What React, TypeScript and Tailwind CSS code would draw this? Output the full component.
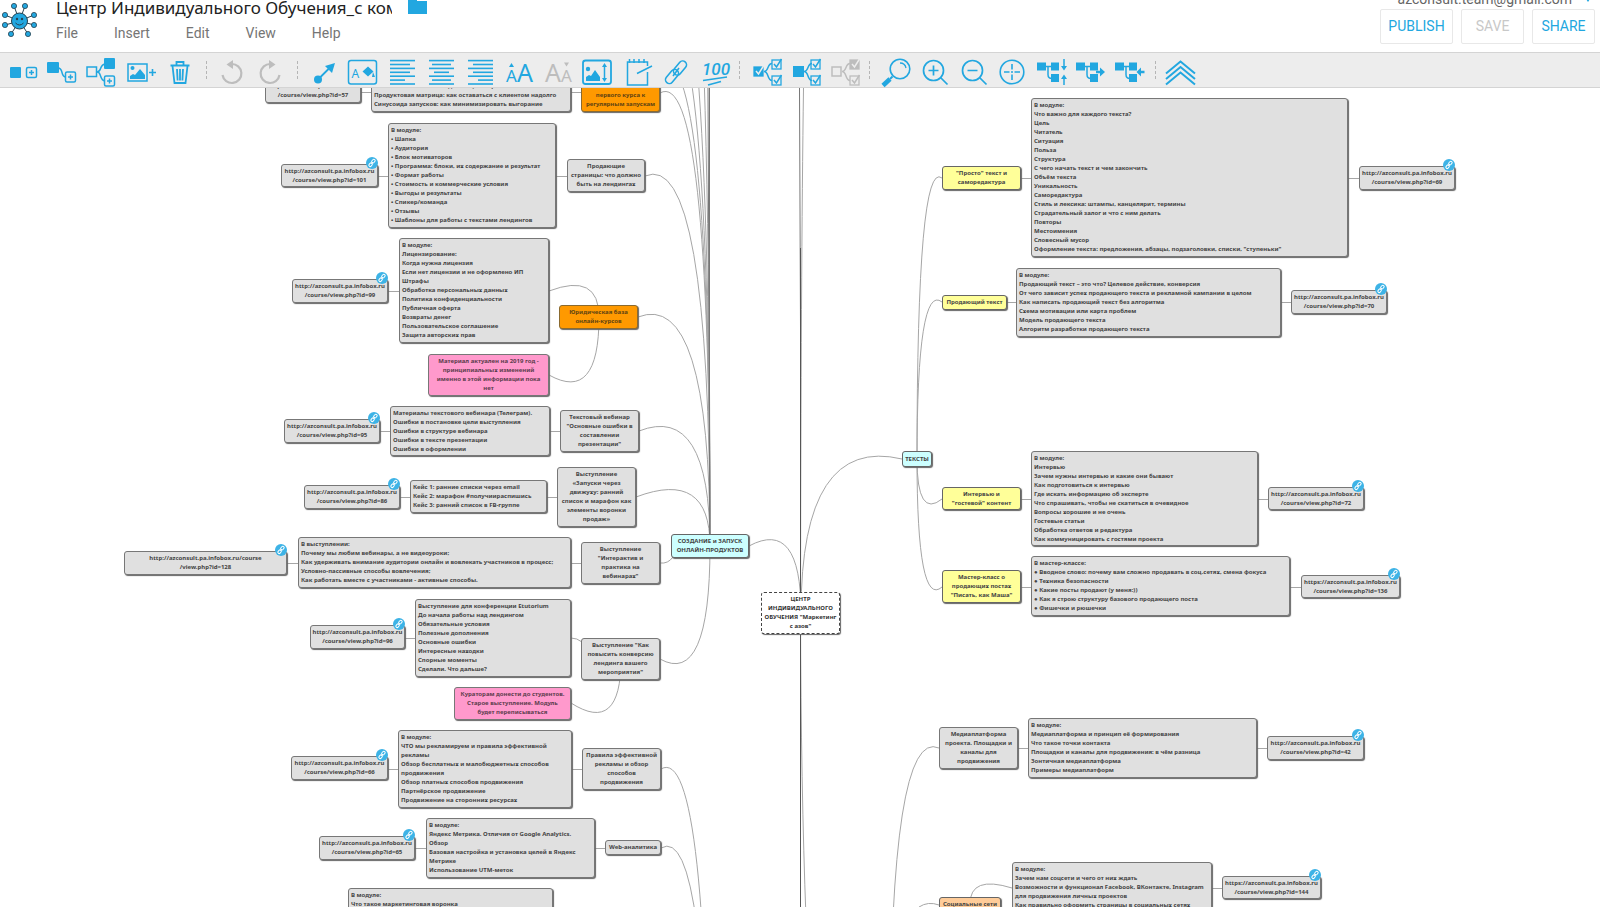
import React from "react";

type Kind = "link" | "list" | "topic";
type Tone = "gray" | "orange" | "pink" | "aqua" | "yellow" | "peach" | "root";

interface MapNode {
  x: number;
  y: number;
  w: number;
  h: number;
  kind: Kind;
  tone?: Tone;
  text: string[];
}

const HOST = "http://azconsult.pa.infobox.ru";
const HOSTS = "https://azconsult.pa.infobox.ru";

const NODES: MapNode[] = [
  { x: 265, y: -9, w: 96, h: 24, kind: "link", text: [HOST, "/course/view.php?id=57"] },
  { x: 371, y: -9, w: 200, h: 33, kind: "list", text: ["Ваша онлайн-школа на дистанции: стратегические планы.", "Продуктовая матрица: как оставаться с клиентом надолго", "Синусоида запусков: как минимизировать выгорание"] },
  { x: 581, y: -9, w: 79, h: 33, kind: "topic", tone: "orange", text: ["онлайн-школы от", "первого курса к", "регулярным запускам"] },
  { x: 281, y: 76, w: 97, h: 23, kind: "link", text: [HOST, "/course/view.php?id=101"] },
  { x: 388, y: 35, w: 168, h: 105, kind: "list", text: ["В модуле:", "• Шапка", "• Аудитория", "• Блок мотиваторов", "• Программа: блоки, их содержание и результат", "• Формат работы", "• Стоимость и коммерческие условия", "• Выгоды и результаты", "• Спикер/команда", "• Отзывы", "• Шаблоны для работы с текстами лендингов"] },
  { x: 567, y: 71, w: 78, h: 33, kind: "topic", text: ["Продающие", "страницы: что должно", "быть на лендингах"] },
  { x: 292, y: 191, w: 96, h: 24, kind: "link", text: [HOST, "/course/view.php?id=99"] },
  { x: 399, y: 150, w: 150, h: 105, kind: "list", text: ["В модуле:", "Лицензирование:", "Когда нужна лицензия", "Если нет лицензии и не оформлено ИП", "Штрафы", "Обработка персональных данных", "Политика конфиденциальности", "Публичная оферта", "Возвраты денег", "Пользовательское соглашение", "Защита авторских прав"] },
  { x: 559, y: 217, w: 79, h: 24, kind: "topic", tone: "orange", text: ["Юридическая база", "онлайн-курсов"] },
  { x: 428, y: 266, w: 121, h: 42, kind: "topic", tone: "pink", text: ["Материал актуален на 2019 год -", "принципиальных изменений", "именно в этой информации пока", "нет"] },
  { x: 284, y: 331, w: 96, h: 24, kind: "link", text: [HOST, "/course/view.php?id=95"] },
  { x: 390, y: 318, w: 160, h: 50, kind: "list", text: ["Материалы текстового вебинара (Телеграм).", "Ошибки в постановке цели выступления", "Ошибки в структуре вебинара", "Ошибки в тексте презентации", "Ошибки в оформлении"] },
  { x: 560, y: 322, w: 79, h: 42, kind: "topic", text: ["Текстовый вебинар", "\"Основные ошибки в", "составлении", "презентации\""] },
  { x: 304, y: 397, w: 96, h: 24, kind: "link", text: [HOST, "/course/view.php?id=86"] },
  { x: 410, y: 392, w: 137, h: 33, kind: "list", text: ["Кейс 1: ранние списки через email", "Кейс 2: марафон #получиираспишись", "Кейс 3: ранний список в FB-группе"] },
  { x: 557, y: 379, w: 79, h: 60, kind: "topic", text: ["Выступление", "«Запуски через", "движуху: ранний", "список и марафон как", "элементы воронки", "продаж»"] },
  { x: 124, y: 463, w: 163, h: 24, kind: "link", text: ["http://azconsult.pa.infobox.ru/course", "/view.php?id=128"] },
  { x: 298, y: 449, w: 273, h: 51, kind: "list", text: ["В выступлении:", "Почему мы любим вебинары, а не видеоуроки;", "Как удерживать внимание аудитории онлайн и вовлекать участников в процесс;", "Условно-пассивные способы вовлечения;", "Как работать вместе с участниками - активные способы."] },
  { x: 581, y: 454, w: 79, h: 42, kind: "topic", text: ["Выступление", "\"Интерактив и", "практика на", "вебинарах\""] },
  { x: 671, y: 446, w: 78, h: 24, kind: "topic", tone: "aqua", text: ["СОЗДАНИЕ и ЗАПУСК", "ОНЛАЙН-ПРОДУКТОВ"] },
  { x: 310, y: 537, w: 95, h: 24, kind: "link", text: [HOST, "/course/view.php?id=96"] },
  { x: 415, y: 511, w: 156, h: 78, kind: "list", text: ["Выступление для конференции Etutorium", "До начала работы над лендингом", "Обязательные условия", "Полезные дополнения", "Основные ошибки", "Интересные находки", "Спорные моменты", "Сделали. Что дальше?"] },
  { x: 581, y: 550, w: 79, h: 42, kind: "topic", text: ["Выступление \"Как", "повысить конверсию", "лендинга вашего", "мероприятия\""] },
  { x: 454, y: 599, w: 117, h: 33, kind: "topic", tone: "pink", text: ["Кураторам донести до студентов.", "Старое выступление. Модуль", "будет переписываться"] },
  { x: 291, y: 668, w: 97, h: 24, kind: "link", text: [HOST, "/course/view.php?id=66"] },
  { x: 398, y: 642, w: 174, h: 78, kind: "list", text: ["В модуле:", "ЧТО мы рекламируем и правила эффективной", "рекламы", "Обзор бесплатных и малобюджетных способов", "продвижения", "Обзор платных способов продвижения", "Партнёрское продвижение", "Продвижение на сторонних ресурсах"] },
  { x: 582, y: 660, w: 79, h: 42, kind: "topic", text: ["Правила эффективной", "рекламы и обзор", "способов", "продвижения"] },
  { x: 319, y: 748, w: 96, h: 24, kind: "link", text: [HOST, "/course/view.php?id=65"] },
  { x: 426, y: 730, w: 169, h: 60, kind: "list", text: ["В модуле:", "Яндекс Метрика. Отличия от Google Analytics.", "Обзор", "Базовая настройка и установка целей в Яндекс", "Метрике", "Использование UTM-меток"] },
  { x: 605, y: 752, w: 56, h: 15, kind: "topic", text: ["Web-аналитика"] },
  { x: 348, y: 800, w: 205, h: 42, kind: "list", text: ["В модуле:", "Что такое маркетинговая воронка"] },
  { x: 761, y: 504, w: 79, h: 42, kind: "topic", tone: "root", text: ["ЦЕНТР", "ИНДИВИДУАЛЬНОГО", "ОБУЧЕНИЯ \"Маркетинг", "с азов\""] },
  { x: 902, y: 363, w: 30, h: 16, kind: "topic", tone: "aqua", text: ["ТЕКСТЫ"] },
  { x: 942, y: 78, w: 79, h: 24, kind: "topic", tone: "yellow", text: ["\"Просто\" текст и", "саморедактура"] },
  { x: 1031, y: 10, w: 317, h: 159, kind: "list", text: ["В модуле:", "Что важно для каждого текста?", "Цель", "Читатель", "Ситуация", "Польза", "Структура", "С чего начать текст и чем закончить", "Объём текста", "Уникальность", "Саморедактура", "Стиль и лексика: штампы, канцелярит, термины", "Страдательный залог и что с ним делать", "Повторы", "Местоимения", "Словесный мусор", "Оформление текста: предложения, абзацы, подзаголовки, списки, \"ступеньки\""] },
  { x: 1359, y: 78, w: 96, h: 24, kind: "link", text: [HOST, "/course/view.php?id=69"] },
  { x: 942, y: 207, w: 65, h: 15, kind: "topic", tone: "yellow", text: ["Продающий текст"] },
  { x: 1016, y: 180, w: 265, h: 69, kind: "list", text: ["В модуле:", "Продающий текст – это что? Целевое действие, конверсия", "От чего зависит успех продающего текста и рекламной кампании в целом", "Как написать продающий текст без алгоритма", "Схема мотивации или карта проблем", "Модель продающего текста", "Алгоритм разработки продающего текста"] },
  { x: 1291, y: 202, w: 96, h: 24, kind: "link", text: [HOST, "/course/view.php?id=70"] },
  { x: 942, y: 399, w: 79, h: 23, kind: "topic", tone: "yellow", text: ["Интервью и", "\"гостевой\" контент"] },
  { x: 1031, y: 363, w: 227, h: 95, kind: "list", text: ["В модуле:", "Интервью", "Зачем нужны интервью и какие они бывают", "Как подготовиться к интервью", "Где искать информацию об эксперте", "Что спрашивать, чтобы не скатиться в очевидное", "Вопросы хорошие и не очень", "Гостевые статьи", "Обработка ответов и редактура", "Как коммуницировать с гостями проекта"] },
  { x: 1268, y: 399, w: 96, h: 23, kind: "link", text: [HOST, "/course/view.php?id=72"] },
  { x: 942, y: 482, w: 79, h: 33, kind: "topic", tone: "yellow", text: ["Мастер-класс о", "продающих постах", "\"Писать, как Маша\""] },
  { x: 1031, y: 468, w: 259, h: 60, kind: "list", text: ["В мастер-классе:", "● Вводное слово: почему вам сложно продавать в соц.сетях, смена фокуса", "● Техника безопасности", "● Какие посты продают (у меня:))", "● Как я строю структуру базового продающего поста", "● Фишечки и рюшечки"] },
  { x: 1301, y: 487, w: 99, h: 23, kind: "link", text: [HOSTS, "/course/view.php?id=136"] },
  { x: 939, y: 639, w: 79, h: 42, kind: "topic", text: ["Медиаплатформа", "проекта. Площадки и", "каналы для", "продвижения"] },
  { x: 1028, y: 630, w: 229, h: 60, kind: "list", text: ["В модуле:", "Медиаплатформа и принцип её формирования", "Что такое точки контакта", "Площадки и каналы для продвижения: в чём разница", "Зонтичная медиаплатформа", "Примеры медиаплатформ"] },
  { x: 1267, y: 648, w: 97, h: 24, kind: "link", text: [HOST, "/course/view.php?id=42"] },
  { x: 939, y: 809, w: 62, h: 15, kind: "topic", tone: "peach", text: ["Социальные сети"] },
  { x: 1012, y: 774, w: 200, h: 60, kind: "list", text: ["В модуле:", "Зачем нам соцсети и чего от них ждать", "Возможности и функционал Facebook, ВКонтакте, Instagram", "для продвижения личных проектов", "Как правильно оформить страницы в социальных сетях"] },
  { x: 1222, y: 788, w: 99, h: 23, kind: "link", text: [HOSTS, "/course/view.php?id=144"] },
];

const TONES: Record<Tone, string> = {
  gray: "border-[#777777] bg-[#e0e0e0] text-[#444444]",
  orange: "border-[#8a6a30] bg-[#ff9900] text-[#5f4413]",
  pink: "border-[#777777] bg-[#ff99cc] text-[#5c3d4d]",
  aqua: "border-[#666666] bg-[#ccffff] text-[#444444]",
  yellow: "border-[#666666] bg-[#ffff99] text-[#444444]",
  peach: "border-[#666666] bg-[#ffcc99] text-[#444444]",
  root: "border-dashed border-[#444444] bg-white text-[#333333]",
};

function LinkBadge() {
  return (
    <a href="#link" aria-label="Open link" className="absolute -top-2 -right-px size-3 rounded-full bg-[#3db3e6]">
      <svg viewBox="0 0 12 12" className="size-3" fill="none" stroke="#fff" strokeWidth="1">
        <rect x="5.4" y="2.8" width="4" height="2.6" rx="1.3" transform="rotate(-50 7.4 4.1)" />
        <rect x="2.6" y="6.4" width="4" height="2.6" rx="1.3" transform="rotate(-50 4.6 7.7)" />
        <path d="M5.2 6.8 6.8 5" />
      </svg>
    </a>
  );
}

function NodeBox({ node }: { node: MapNode }) {
  const align = node.kind === "list" ? "items-start pt-[2px]" : "items-center justify-center";
  return (
    <div
      className={`absolute flex flex-col rounded-[3px] border px-[2px] text-[6px] leading-[9px] font-bold whitespace-nowrap shadow-[1px_1px_1px_#666666] ${align} ${TONES[node.tone ?? "gray"]}`}
      style={{ left: node.x, top: node.y, width: node.w, height: node.h }}
    >
      {node.text.map((line, i) => (
        <span key={i}>{line}</span>
      ))}
      {node.kind === "link" && <LinkBadge />}
    </div>
  );
}

/* parent centre, child edge, overshoot of the control point beyond the child */
const CURVES: [number, number, number, number, number][] = [
  [710, 458, 660, 5, -28],
  [710, 458, 660, -24, -28],
  [710, 458, 660, -74, -28],
  [710, 458, 660, -158, -28],
  [710, 458, 660, -345, -28],
  [710, 458, 645, 88, -28],
  [710, 458, 638, 229, -28],
  [710, 458, 639, 343, -28],
  [710, 458, 636, 409, -28],
  [710, 458, 660, 571, 28],
  [599, 229, 549, 203, -19],
  [599, 229, 549, 287, 28],
  [621, 571, 571, 615, 32],
  [709, 1120, 661, 681, -28],
  [709, 1130, 661, 760, -28],
  [801, 525, 749, 458, -28],
  [801, 525, 902, 371, -24],
  [917, 371, 942, 90, -20],
  [917, 371, 942, 214, -20],
  [917, 371, 942, 411, 20],
  [917, 371, 942, 499, 22],
  [890, 972, 939, 660, -22],
  [970, 816, 1012, 800, -13],
];

const STRAIGHTS: [number, number, number][] = [
  [361, 371, 4], [571, 581, 4], [378, 388, 88], [556, 567, 88], [388, 399, 203],
  [380, 390, 343], [550, 560, 343], [400, 410, 409], [547, 557, 409], [287, 298, 475],
  [571, 581, 475], [405, 415, 550], [388, 398, 681], [572, 582, 681], [415, 426, 760],
  [595, 605, 760], [1021, 1031, 90], [1348, 1359, 90], [1007, 1016, 214], [1281, 1291, 214],
  [1021, 1031, 411], [1258, 1268, 411], [1021, 1031, 499], [1290, 1301, 499], [1018, 1028, 660],
  [1257, 1267, 660], [1212, 1222, 800],
];

function Connectors() {
  return (
    <svg className="absolute top-0 left-0 h-full w-full" fill="none" stroke="#a6a6a6" strokeWidth="1">
      {CURVES.map(([px, py, cx, cy, d], i) => (
        <path key={i} d={`M${px} ${py}Q${px} ${cy + d} ${cx} ${cy}`} />
      ))}
      {STRAIGHTS.map(([x1, x2, y], i) => (
        <path key={i} d={`M${x1} ${y}.5H${x2}`} />
      ))}
      <path d="M660 475Q668 476 673 469M571 550Q577 550 582 554M919 819Q928 813 939 817" />
      <path d="M708 0 710 458M709.500 0V458" stroke="#777" />
      <path d="M799.500 0 800.500 240V525" stroke="#777" />
      <path d="M803.500 0Q801 180 800.500 525M800.500 525Q801 700 806 830" />
      <path d="M800.500 160V900" stroke="#555" />
    </svg>
  );
}

const BLUE = "#22a7e0";
const GRAY = "#bdbdbd";

function Check({ x, y, c = BLUE, solid = false }: { x: number; y: number; c?: string; solid?: boolean }) {
  return (
    <g stroke={c} fill="none">
      <rect x={x} y={y} width="9" height="9" fill={solid ? c : "none"} strokeWidth="1.3" />
      <path d={`M${x + 2} ${y + 4}l2.500 3 5-8`} stroke={solid ? "#ededed" : c} strokeWidth="1.500" />
    </g>
  );
}

function PlusBox({ x, y }: { x: number; y: number }) {
  return (
    <g fill="none" stroke={BLUE} strokeWidth="1.5">
      <rect x={x} y={y} width="10" height="10" rx="1.5" />
      <path d={`M${x + 5} ${y + 2.5}v5M${x + 2.5} ${y + 5}h5`} />
    </g>
  );
}

function AlignLines({ rows }: { rows: [number, number][] }) {
  return (
    <g stroke={BLUE} strokeWidth="1.6">
      {rows.map(([a, b], i) => (
        <path key={i} d={`M${a} ${60.6 + i * 3.9}H${b}`} />
      ))}
    </g>
  );
}

function Tree({ x }: { x: number }) {
  return (
    <g>
      <path d={`M${x} 62.500h9v8h-9zM${x + 14} 62.500h8v8h-8zM${x + 14} 74h8v8h-8z`} fill={BLUE} />
      <path d={`M${x + 9} 66.500h5M${x + 11} 66.500v8q0 4 4 4`} fill="none" stroke={BLUE} strokeWidth="1.500" />
    </g>
  );
}

function CheckTree({ x, c = BLUE, children }: { x: number; c?: string; children: React.ReactNode }) {
  return (
    <g>
      {children}
      <path d={`M${x + 11} 71.500c5 0 3-8 8-8M${x + 11} 71.500c5 0 3 9 8 9`} fill="none" stroke={c} strokeWidth="1.500" />
    </g>
  );
}

type Tool = { label: string; icon: React.ReactNode; disabled?: boolean };

const GROUPS: Tool[][] = [
  [
    {
      label: "Add sibling",
      icon: (
        <g>
          <rect x="10" y="67" width="11" height="11" rx="1" fill={BLUE} />
          <PlusBox x={26.5} y={67.5} />
        </g>
      ),
    },
    {
      label: "Add child",
      icon: (
        <g>
          <rect x="47" y="62" width="12" height="11" rx="1" fill={BLUE} />
          <path d="M58 68c6 0 2 9 8 9" fill="none" stroke={BLUE} strokeWidth="1.5" />
          <PlusBox x={65.5} y={72} />
        </g>
      ),
    },
    {
      label: "Insert parent",
      icon: (
        <g>
          <rect x="87" y="67" width="9.500" height="9.500" fill="none" stroke={BLUE} strokeWidth="1.5" />
          <path d="M97 72c5 0 2-7 8-8M97 72c5 0 2 8 8 9" fill="none" stroke={BLUE} strokeWidth="1.5" />
          <rect x="104" y="58" width="11" height="11" rx="1" fill={BLUE} />
          <PlusBox x={104.5} y={76} />
        </g>
      ),
    },
    {
      label: "Add image",
      icon: (
        <g>
          <rect x="128" y="64" width="19" height="17" fill="none" stroke={BLUE} strokeWidth="1.5" />
          <circle cx="132.500" cy="68" r="2" fill={BLUE} />
          <path d="M130 79v-3l3-2 2 1 5-6 5 6v4z" fill={BLUE} />
          <path d="M149 72.500h7M152.500 69v7" stroke={BLUE} strokeWidth="1.6" />
        </g>
      ),
    },
    {
      label: "Delete",
      icon: (
        <g fill="none" stroke={BLUE} strokeWidth="1.8">
          <path d="M170.500 65.500h19M176.500 65v-3h7v3M172.500 66l2 17h11l2-17M177 69l.6 11.500M180 69v11.500M183 69l-.6 11.500" />
        </g>
      ),
    },
  ],
  [
    {
      label: "Undo",
      disabled: true,
      icon: (
        <g>
          <path d="M222.500 75a9.500 9.500 0 1 0 9-11" fill="none" stroke={GRAY} strokeWidth="2.200" />
          <path d="M226.500 64.500 233 60v9z" fill={GRAY} />
        </g>
      ),
    },
    {
      label: "Redo",
      disabled: true,
      icon: (
        <g>
          <path d="M279.500 75a9.500 9.500 0 1 1-9-11" fill="none" stroke={GRAY} strokeWidth="2.200" />
          <path d="M275.500 64.500 269 60v9z" fill={GRAY} />
        </g>
      ),
    },
  ],
  [
    {
      label: "Connect",
      icon: (
        <g fill={BLUE}>
          <circle cx="318" cy="79.500" r="4" />
          <path d="M318 79.500 330 67.500" stroke={BLUE} strokeWidth="1.8" />
          <path d="M335 63l-3 10-7-7z" />
        </g>
      ),
    },
    {
      label: "Node colour",
      icon: (
        <g>
          <rect x="348.500" y="60.500" width="28" height="23.500" rx="2.500" fill="none" stroke={BLUE} strokeWidth="1.5" />
          <text x="351.500" y="77.500" fontSize="12" fill={BLUE} fontFamily="Noto Sans, sans-serif">A</text>
          <path d="M368 66.500l5.500 5-5.500 5-5.500-5zM373 72l2 5h-3z" fill={BLUE} />
        </g>
      ),
    },
    { label: "Align left", icon: <AlignLines rows={[[390, 415], [390, 410], [390, 415], [390, 410], [390, 415], [390, 405], [390, 415]]} /> },
    { label: "Align centre", icon: <AlignLines rows={[[429, 454], [432, 451], [429, 454], [434, 449], [429, 454], [432, 451], [429, 454]]} /> },
    { label: "Align right", icon: <AlignLines rows={[[468, 493], [473, 493], [468, 493], [473, 493], [468, 493], [478, 493], [468, 493]]} /> },
    {
      label: "Larger text",
      icon: (
        <g fill={BLUE} fontFamily="Noto Sans, sans-serif">
          <text x="506" y="82" fontSize="17">A</text>
          <text x="517" y="82" fontSize="25">A</text>
          <path d="M509 67l2.500-4 2.500 4z" />
        </g>
      ),
    },
    {
      label: "Smaller text",
      disabled: true,
      icon: (
        <g fill={GRAY} fontFamily="Noto Sans, sans-serif">
          <text x="545" y="82" fontSize="25">A</text>
          <text x="561" y="82" fontSize="17">A</text>
          <path d="M564 62.500l2.500 4 2.500-4z" />
        </g>
      ),
    },
    {
      label: "Resize image",
      icon: (
        <g>
          <rect x="583" y="60.500" width="28" height="23.500" rx="2.500" fill="none" stroke={BLUE} strokeWidth="1.800" />
          <circle cx="588" cy="69" r="2.200" fill={BLUE} />
          <path d="M586 81v-4l3-2 2 1 4-6 5 7v4z" fill={BLUE} />
          <path d="M604.500 66v12" stroke={BLUE} strokeWidth="1.5" />
          <path d="M602 67l2.500-4 2.500 4zM602 78l2.500 4 2.500-4z" fill={BLUE} />
        </g>
      ),
    },
    {
      label: "Notes",
      icon: (
        <g fill="none" stroke={BLUE} strokeWidth="1.5">
          <path d="M647.500 66v-4h-20v23h20V72M629.500 59v4M634 59v4M639 59v4M644 59v4M637 73.500l15-7.500" />
        </g>
      ),
    },
    {
      label: "Attach link",
      icon: (
        <g fill="none" stroke={BLUE} strokeWidth="1.6">
          <rect x="-8" y="-3.800" width="16" height="7.600" rx="3.800" transform="translate(672 76.500) rotate(-50)" />
          <rect x="-8" y="-3.800" width="16" height="7.600" rx="3.800" transform="translate(680 68) rotate(-50)" />
          <path d="M673 76l6-8" />
        </g>
      ),
    },
    {
      label: "Measurements",
      icon: (
        <g>
          <text x="702" y="75" fontSize="17" fontStyle="italic" fontWeight="500" fill={BLUE} fontFamily="Roboto, sans-serif">100</text>
          <path d="M703 80.500l24-3.500M708 85l13-3.500" stroke={BLUE} strokeWidth="1.700" />
        </g>
      ),
    },
  ],
  [
    {
      label: "Select matching",
      icon: <CheckTree x={753}><Check x={754} y={67} solid /><Check x={772} y={60} /><Check x={772} y={76} /></CheckTree>,
    },
    {
      label: "Select children",
      icon: <CheckTree x={793}><rect x="793" y="66" width="11" height="11" fill={BLUE} /><Check x={811} y={60} /><Check x={811} y={76} /></CheckTree>,
    },
    {
      label: "Clear selection",
      disabled: true,
      icon: <CheckTree x={831} c={GRAY}><rect x="832" y="67" width="9" height="9" fill="none" stroke={GRAY} strokeWidth="1.500" /><Check x={850} y={60} c={GRAY} solid /><Check x={850} y={76} c={GRAY} /></CheckTree>,
    },
  ],
  [
    {
      label: "Search",
      icon: (
        <g fill="none" stroke={BLUE}>
          <circle cx="900" cy="69" r="9.800" strokeWidth="1.600" />
          <path d="M900 63q5 0 6 5" strokeWidth="1.300" />
          <path d="M892.500 76.500 890 79" strokeWidth="2" />
          <path d="M890 79l-7 6.500" strokeWidth="4.600" />
        </g>
      ),
    },
    {
      label: "Zoom in",
      icon: <g fill="none" stroke={BLUE} strokeWidth="1.700"><circle cx="933.500" cy="70.500" r="10" /><path d="M940.500 77.500l7 7M928.500 70.500h10M933.500 65.500v10" /></g>,
    },
    {
      label: "Zoom out",
      icon: <g fill="none" stroke={BLUE} strokeWidth="1.700"><circle cx="972.500" cy="70.500" r="10" /><path d="M979.500 77.500l7 7M967.500 70.500h10" /></g>,
    },
    {
      label: "Centre map",
      icon: <g fill="none" stroke={BLUE} strokeWidth="1.600"><circle cx="1012" cy="72" r="11.800" /><path d="M1004 72h5.500M1014.500 72h5.500M1012 64v5.500M1012 74.500v5.500M1011 72h2" /></g>,
    },
    {
      label: "Collapse vertically",
      icon: <g><Tree x={1037} /><path d="M1064 59v8M1064 85v-8" stroke={BLUE} strokeWidth="1.500" /><path d="M1061 66h6l-3 4.500zM1061 79h6l-3-4.500z" fill={BLUE} /></g>,
    },
    {
      label: "Expand",
      icon: <g><Tree x={1076} /><path d="M1100 67.500l5 4.500-5 4.500z" fill={BLUE} /><path d="M1096 72h5" stroke={BLUE} strokeWidth="2.500" /></g>,
    },
    {
      label: "Collapse",
      icon: <g><Tree x={1115} /><path d="M1141 67.500l-4.500 4.500 4.500 4.500z" fill={BLUE} /><path d="M1140 72h4.500" stroke={BLUE} strokeWidth="2.500" /></g>,
    },
  ],
  [
    {
      label: "Hide toolbar",
      icon: <g fill="none" stroke={BLUE} strokeWidth="2"><path d="M1166 73.500l14.500-12 14.500 12M1166 79l14.500-12 14.500 12M1166 84.500l14.500-12 14.500 12" /></g>,
    },
  ],
];

const FIRST = 5;
const STEP = 39;
const GAP = 13;
const OFFSETS = GROUPS.map((_, i) => FIRST + GROUPS.slice(0, i).reduce((sum, g) => sum + g.length * STEP + GAP, 0));

function Toolbar() {
  return (
    <div role="toolbar" aria-label="Map tools" className="flex h-9 shrink-0 border-y border-[#d4d4d4] bg-[#ededed] pl-[5px]">
      {GROUPS.map((group, g) => (
        <React.Fragment key={g}>
          {g > 0 && (
            <div className="flex w-[13px] justify-center py-2">
              <div className="w-px border-l border-dashed border-[#b5b5b5]" />
            </div>
          )}
          {group.map((tool, i) => (
            <button key={tool.label} type="button" aria-label={tool.label} disabled={tool.disabled} className="w-[39px] shrink-0">
              <svg viewBox={`${OFFSETS[g] + i * STEP} 53 39 34`} className="block h-[34px] w-[39px] overflow-visible">
                {tool.icon}
              </svg>
            </button>
          ))}
        </React.Fragment>
      ))}
    </div>
  );
}

function Logo() {
  const arms = [[5, 15], [14, 6], [25, 6], [34, 15], [5, 25], [34, 25], [11, 34], [28, 34]];
  return (
    <svg viewBox="0 0 39 39" className="h-[39px] w-[39px]" stroke="#26414f">
      {arms.map(([x, y], i) => (
        <g key={i}>
          <path d={`M19.500 21 ${x} ${y}`} strokeWidth="1" />
          <circle cx={x} cy={y} r="2.600" fill={BLUE} strokeWidth="0.800" />
        </g>
      ))}
      <circle cx="19.500" cy="21" r="8" fill={BLUE} strokeWidth="1" />
      <circle cx="17" cy="19" r="1.200" fill="#26414f" stroke="none" />
      <circle cx="22" cy="19" r="1.200" fill="#26414f" stroke="none" />
      <path d="M15.500 23q4 4 8 0" fill="none" strokeWidth="1" />
    </svg>
  );
}

const BUTTON = "h-[35px] rounded-xs border border-[#e8e8e8] bg-white text-[14px]";

function Header() {
  return (
    <header className="flex h-[52px] shrink-0 justify-between overflow-hidden bg-white font-[Roboto,sans-serif]">
      <div className="flex">
        <div className="w-14">
          <Logo />
        </div>
        <div>
          <div className="flex h-[22px] items-start gap-4">
            <input aria-label="Map title" defaultValue="Центр Индивидуального Обучения_с ком" className="-mt-1 h-6 w-[336px] bg-transparent font-['Noto_Sans',sans-serif] text-[17px] leading-6 text-[#222222] outline-none" />
            <svg viewBox="0 0 19 16" className="-mt-[2px] h-4 w-[19px]" fill={BLUE}>
              <path d="M0 0h9v3h10v13H0z" />
            </svg>
          </div>
          <nav className="flex gap-9 text-[14px] leading-[22px] text-[#757575]">
            {["File", "Insert", "Edit", "View", "Help"].map((item) => (
              <button key={item} type="button">{item}</button>
            ))}
          </nav>
        </div>
      </div>
      <div className="flex flex-col items-end pr-[5px]">
        <div className="-mt-[11px] flex h-5 items-center gap-3 pr-[3px] text-[14px] leading-5 text-[#666666]">
          <span>azconsult.team@gmail.com</span>
          <svg viewBox="0 0 8 6" className="h-[6px] w-2" fill={BLUE}>
            <path d="M0 0h8L4 6z" />
          </svg>
        </div>
        <div className="flex gap-2">
          <button type="button" className={`${BUTTON} w-[73px] text-[#22a7e0]`}>PUBLISH</button>
          <button type="button" disabled className={`${BUTTON} w-[63px] text-[#c8c8c8]`}>SAVE</button>
          <button type="button" className={`${BUTTON} w-[63px] text-[#22a7e0]`}>SHARE</button>
        </div>
      </div>
    </header>
  );
}

export default function App() {
  return (
    <div className="flex h-screen flex-col overflow-hidden bg-white">
      <Header />
      <Toolbar />
      <main className="relative min-h-0 flex-1 overflow-hidden bg-white font-['Noto_Sans',sans-serif]">
        <Connectors />
        {NODES.map((node, i) => (
          <NodeBox key={i} node={node} />
        ))}
      </main>
    </div>
  );
}
